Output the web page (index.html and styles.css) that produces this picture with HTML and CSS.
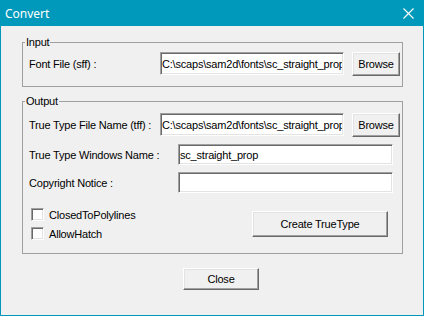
FILE: index.html
```html
<!DOCTYPE html>
<html lang="en">
<head>
  <meta charset="UTF-8" />
  <title>Convert</title>
  <link rel="stylesheet" href="styles.css">
</head>
<body>

  <div class="window">
    <div class="titlebar">
      <span class="title">Convert</span>
      <svg class="close-x" width="11" height="11" viewBox="0 0 11 11">
        <path d="M0.5 0.5 L10.5 10.5 M10.5 0.5 L0.5 10.5" stroke="#fff" stroke-width="1.1" fill="none" />
      </svg>
    </div>

    <div class="client">
      <fieldset class="group group-input">
        <legend>Input</legend>
        <div class="row">
          <span class="lbl lbl-short">Font File (sff) :</span>
          <input class="field field-path" type="text" value="C:\scaps\sam2d\fonts\sc_straight_prop.sff" readonly>
          <button class="btn btn-browse">Browse</button>
        </div>
      </fieldset>

      <fieldset class="group group-output">
        <legend>Output</legend>
        <div class="row">
          <span class="lbl lbl-short">True Type File Name (tff) :</span>
          <input class="field field-path" type="text" value="C:\scaps\sam2d\fonts\sc_straight_prop.ttf" readonly>
          <button class="btn btn-browse">Browse</button>
        </div>
        <div class="row row-gap">
          <span class="lbl lbl-long">True Type Windows Name :</span>
          <input class="field field-wide" type="text" value="sc_straight_prop" readonly>
        </div>
        <div class="row row-gap">
          <span class="lbl lbl-long">Copyright Notice :</span>
          <input class="field field-wide" type="text" value="" readonly>
        </div>

        <div class="options">
          <div class="checks">
            <label class="check"><span class="box"></span>ClosedToPolylines</label>
            <label class="check"><span class="box"></span>AllowHatch</label>
          </div>
          <button class="btn btn-create">Create TrueType</button>
        </div>
      </fieldset>

      <div class="footer">
        <button class="btn btn-close">Close</button>
      </div>
    </div>
  </div>

</body>
</html>
```

FILE: styles.css
```css
* {
  box-sizing: border-box;
}
body {
  margin: 0;
  font-family: 'Liberation Sans', Arial, sans-serif;
  font-size: 11px;
  letter-spacing: -0.2px;
  color: #000;
  background: #f0f0f0;
}
.window {
  width: 424px;
  height: 316px;
  background: #f0f0f0;
  border: 1px solid #0099bb;
  border-top: 0;
  display: flex;
  flex-direction: column;
}
.titlebar {
  height: 26px;
  flex: none;
  background: #0099bb;
  color: #fff;
  display: flex;
  align-items: center;
  justify-content: space-between;
  padding: 0 9px 0 4px;
  font-family: 'Noto Sans', sans-serif;
  font-size: 12px;
  letter-spacing: 0;
}
.close-x {
  display: block;
}
.client {
  padding: 10px 20px 0 21px;
}

/* group boxes */
.group {
  margin: 0;
  min-width: 0;
  border: 1px solid #a0a0a0;
  padding: 3px 2px 10px 6px;
}
.group legend {
  font-size: 11px;
  line-height: 13px;
  padding: 0 1px;
  margin-left: -4px;
}
.group-output {
  margin-top: 8px;
  padding-top: 5px;
}
.row {
  display: flex;
  align-items: flex-start;
}
.row-gap {
  margin-top: 7px;
}
.lbl {
  flex: none;
  align-self: center;
  white-space: nowrap;
}
.lbl-short { width: 131px; }
.lbl-long { width: 149px; }

/* sunken edit fields */
.field {
  flex: none;
  height: 23px;
  margin: 0;
  padding: 0 1px;
  font-family: inherit;
  font-size: 11px;
  letter-spacing: inherit;
  color: #000;
  background: #fff;
  border: 1px solid;
  border-color: #a0a0a0 #fff #fff #a0a0a0;
  box-shadow: inset 1px 1px 0 #696969, inset -1px -1px 0 #e3e3e3;
  outline: none;
}
.field-path { width: 184px; }
.field-wide {
  width: 215px;
  height: 21px;
}

/* raised push buttons */
.btn {
  margin: 0;
  padding: 0;
  font-family: inherit;
  font-size: 11px;
  letter-spacing: inherit;
  color: #000;
  background: #f0f0f0;
  border: 1px solid;
  border-color: #fff #696969 #696969 #fff;
  box-shadow: inset -1px -1px 0 #a0a0a0, inset 1px 1px 0 #e3e3e3;
  cursor: pointer;
}
.btn-browse {
  flex: none;
  width: 48px;
  height: 24px;
  margin-left: 8px;
}

/* checkboxes + create */
.options {
  margin-top: 12px;
  display: flex;
  justify-content: space-between;
  align-items: flex-start;
}
.checks {
  display: flex;
  flex-direction: column;
  padding-left: 2px;
}
.check {
  height: 19px;
  display: flex;
  align-items: center;
  gap: 5px;
}
.box {
  width: 13px;
  height: 13px;
  background: #fff;
  border: 1px solid;
  border-color: #a0a0a0 #fff #fff #a0a0a0;
  box-shadow: inset 1px 1px 0 #696969, inset -1px -1px 0 #e3e3e3;
}
.btn-create {
  width: 136px;
  height: 26px;
  margin-top: 6px;
  margin-right: 12px;
}

.footer {
  padding: 14px 0 0 161px;
}
.btn-close {
  width: 76px;
  height: 22px;
}
```
